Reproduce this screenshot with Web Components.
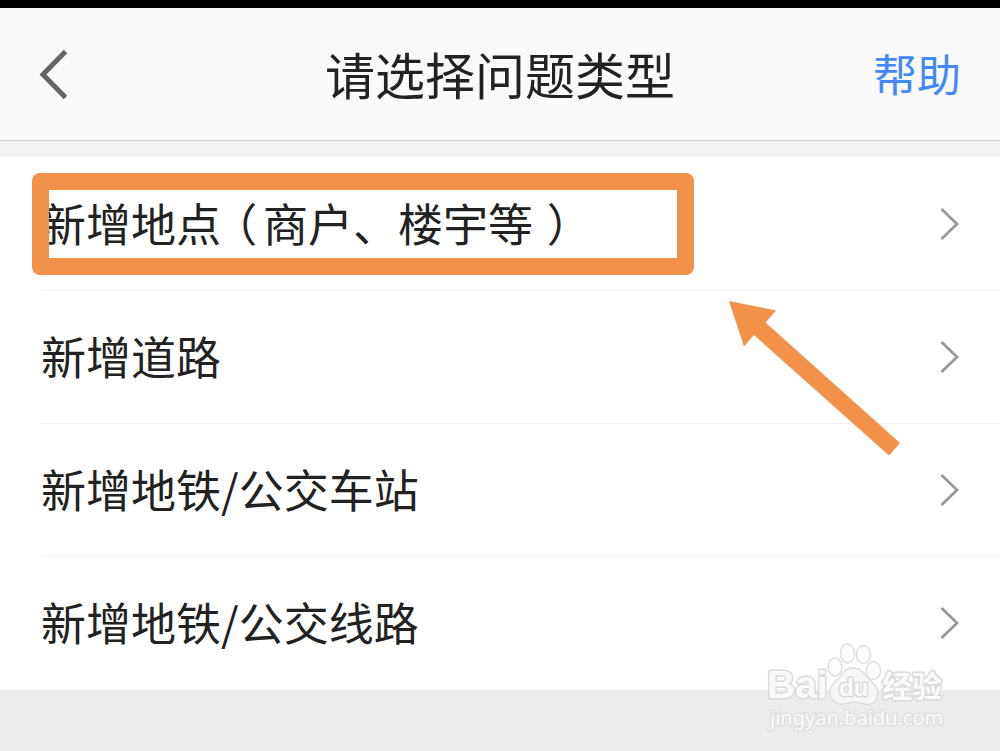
<!DOCTYPE html>
<html lang="zh-CN">
<head>
<meta charset="utf-8">
<meta name="viewport" content="width=device-width, initial-scale=1">
<title>请选择问题类型</title>
<style>
  body { margin: 0; background: #ececec; color: #222; font-family: "Noto Sans CJK SC", sans-serif; }
</style>
</head>
<body>
<report-page>
  <nav-header slot="header">请选择问题类型<a slot="action" href="#help">帮助</a></nav-header>
  <type-list>
    <type-row href="#place">新增地点<full-paren>（</full-paren>商户、楼宇等<full-paren>）</full-paren></type-row>
    <type-row href="#road">新增道路</type-row>
    <type-row href="#station">新增地铁/公交车站</type-row>
    <type-row href="#line">新增地铁/公交线路</type-row>
    <highlight-box slot="overlay"></highlight-box>
    <pointer-arrow slot="overlay"></pointer-arrow>
  </type-list>
  <site-mark slot="mark"></site-mark>
</report-page>
<script>
  const define = (name, html, setup) => {
    const template = document.createElement('template');
    template.innerHTML = html;
    customElements.define(name, class extends HTMLElement {
      constructor() {
        super();
        this.attachShadow({ mode: 'open' }).append(template.content.cloneNode(true));
      }
      connectedCallback() { if (setup) setup(this, this.shadowRoot); }
    });
  };

  define('report-page', `
    <style>
      :host { display: block; position: relative; min-height: 100vh; border-top: 8px solid #000; box-sizing: border-box; }
      ::slotted(type-list) { border-top: 16px solid #f3f3f3; }
      ::slotted(site-mark) { position: absolute; right: 50px; bottom: 20px; }
    </style>
    <slot name="header"></slot>
    <main><slot></slot></main>
    <slot name="mark"></slot>`);

  define('nav-header', `
    <style>
      :host { display: block; background: #fafafa; border-bottom: 1px solid #d2d2d2; }
      header { display: grid; grid-template-columns: 1fr auto 1fr; align-items: center; height: 132px; padding: 0 39px; }
      button { justify-self: start; display: flex; border: 0; padding: 0; background: none; }
      h1 { margin: 0; padding-bottom: 2px; font-size: 50px; line-height: 72px; font-weight: 400; }
      ::slotted(a) { justify-self: end; padding-bottom: 2px; color: #4288ff; font-size: 44px; line-height: 64px; text-decoration: none; }
    </style>
    <header>
      <button type="button" aria-label="返回">
        <svg width="30" height="50" viewBox="0 0 30 50" fill="none" stroke="#666" stroke-width="5"><path d="M26.500 2.500 4 25.500 26.500 48.500"/></svg>
      </button>
      <h1><slot></slot></h1>
      <slot name="action"></slot>
    </header>`);

  define('type-list', `
    <style>
      :host { display: block; position: relative; background: #fff; padding-bottom: 1px; }
      ::slotted(type-row:not(:first-of-type)) { --rule: #f2f2f2; }
    </style>
    <slot></slot><slot name="overlay"></slot>`);

  define('type-row', `
    <style>
      :host { display: block; padding-left: 41px; }
      a { display: flex; align-items: center; justify-content: space-between; box-sizing: border-box; height: 133px;
          padding-right: 40px; border-top: 1px solid var(--rule, transparent); color: inherit; text-decoration: none; font-size: 45px; line-height: 64px; }
      span { padding-bottom: 2px; }
    </style>
    <a><span><slot></slot></span>
      <svg width="20" height="34" viewBox="0 0 20 34" fill="none" stroke="#999" stroke-width="2.800" aria-hidden="true"><path d="M1.500 2 17 17 1.500 32"/></svg>
    </a>`, (host, root) => { root.querySelector('a').href = host.getAttribute('href'); });

  /* Parenthesis set at half width inside its own cell. */
  define('full-paren', `<style>:host { display: inline-block; box-sizing: border-box; width: 42px; padding-left: 8px; text-align: center; font-feature-settings: "halt"; }</style><slot></slot>`);

  define('highlight-box', `
    <style>
      :host { position: absolute; left: 32px; top: 16px; box-sizing: border-box; width: 662px; height: 102px;
              border: 17px solid #f2914a; border-radius: 8px; pointer-events: none; }
    </style>`);

  define('pointer-arrow', `
    <style>:host { position: absolute; right: 100px; top: 144px; pointer-events: none; } svg { display: block; }</style>
    <svg width="171" height="155" viewBox="0 0 171 155" fill="#f2914a" aria-hidden="true"><path d="M0 0 47 9.500 36.500 21.500 171 142 160 154.500 25 34 15 45.500Z"/></svg>`);

  define('site-mark', `
    <style>
      :host { display: block; pointer-events: none; }
      svg { display: block; overflow: visible; }
      text { paint-order: stroke; stroke: #dadada; stroke-width: 3px; stroke-linejoin: round; fill: #fafafa; }
      .brand { font: bold 39px "Liberation Sans", sans-serif; }
      .du { font: bold 24px "Liberation Sans", sans-serif; }
      .cjk { font: bold 30px "Noto Sans CJK SC", sans-serif; }
      .url { font: 20px "Noto Sans", sans-serif; stroke: #e0e0e0; }
    </style>
    <svg width="184" height="88" viewBox="0 0 184 88">
      <g fill="#fdfdfd" stroke="#dedede" stroke-width="1.500">
        <ellipse cx="69" cy="24" rx="7" ry="9"/><ellipse cx="81.500" cy="10.500" rx="7" ry="9.500"/>
        <ellipse cx="97.500" cy="11.500" rx="7" ry="9"/><ellipse cx="107.500" cy="27.500" rx="7" ry="9"/>
        <path fill="#f6f6f6" d="M88 25C78 24 76 33 70 38C60 46 63 59 74 61C80 62 83 59 88 59C94 59 99 63 105 61C115 57 113 45 106 39C101 35 98 26 88 25Z"/>
      </g>
      <text class="brand" x="1" y="55">Bai</text>
      <text class="du" x="73" y="53">du</text>
      <text class="cjk" x="116" y="54">经验</text>
      <text class="url" x="4" y="82">jingyan.baidu.com</text>
    </svg>`);
</script>
</body>
</html>
